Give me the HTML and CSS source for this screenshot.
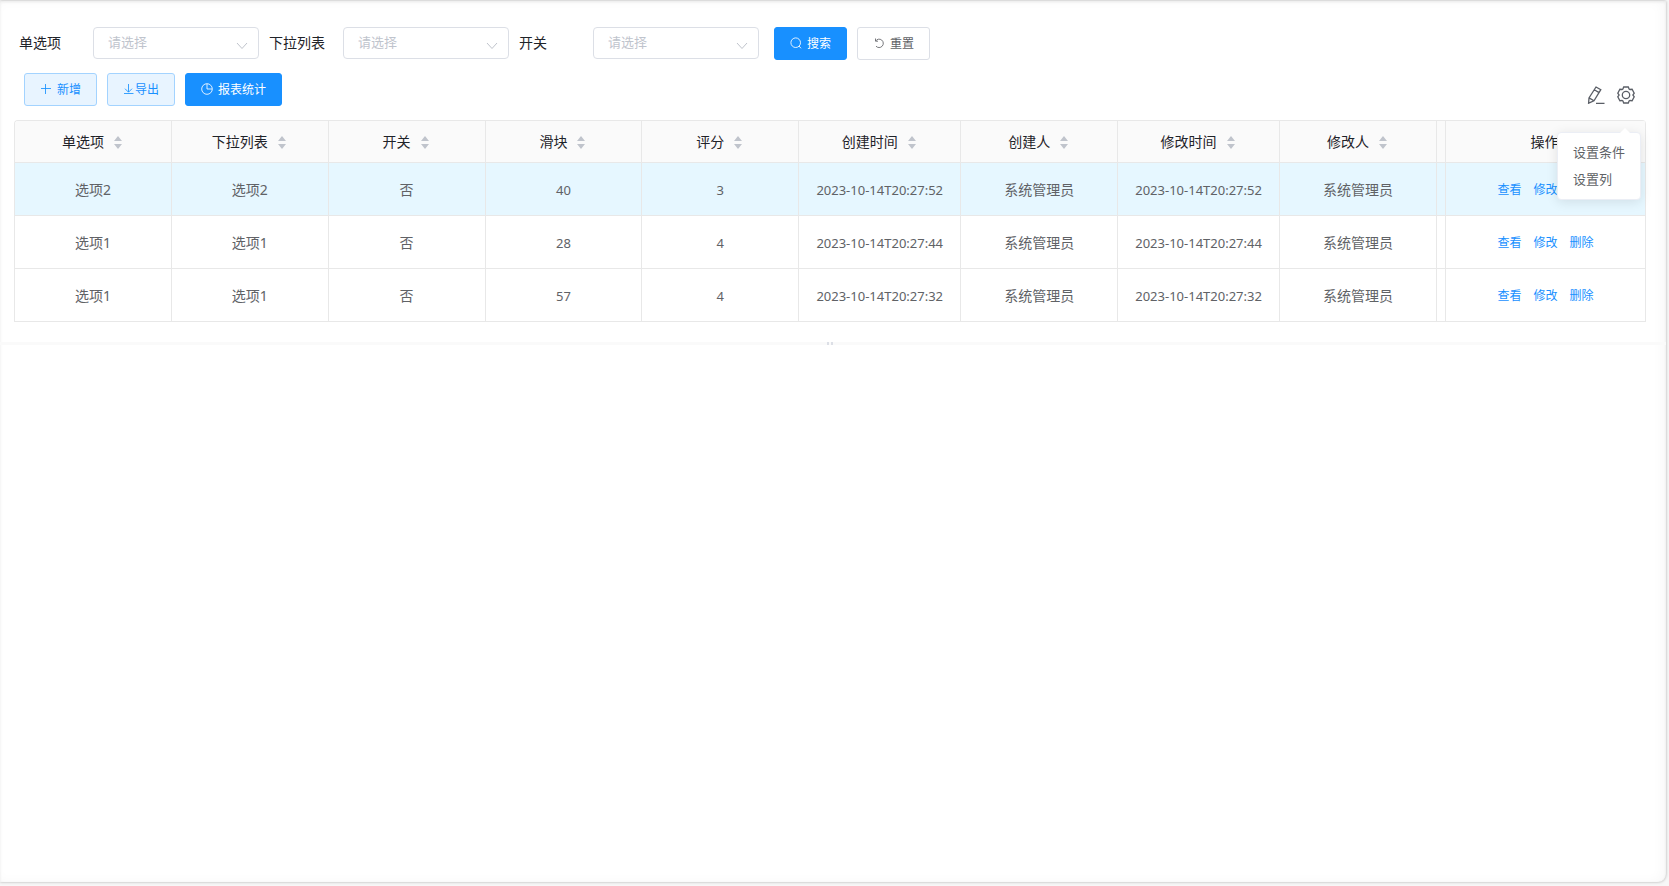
FILE: index.html
```
<!DOCTYPE html>
<html lang="zh-CN">
<head>
<meta charset="utf-8">
<title>列表</title>
<link rel="stylesheet" href="styles.css">
</head>
<body>
<svg class="defs" aria-hidden="true">
  <symbol id="sort" viewBox="0 0 8 13"><path d="M4 0 8 5H0zM0 8h8l-4 5z"/></symbol>
  <symbol id="search" viewBox="0 0 12 12"><circle cx="5.7" cy="5.7" r="4.8"/><path d="m9 9 2 2.3"/></symbol>
  <symbol id="reset" viewBox="0 0 12 12"><path d="M2.5 1.5V4.2H5M2.6 4A4.2 4.2 0 1 1 3 9.2"/></symbol>
  <symbol id="plus" viewBox="0 0 12 12"><path d="M5.5 1v10M1 5.5h10"/></symbol>
  <symbol id="download" viewBox="0 0 12 12"><path d="M5.5 1v8M2 5.7 5.5 9.2 9 5.7M1 10.5h9.5"/></symbol>
  <symbol id="pie" viewBox="0 0 12 12"><circle cx="6" cy="6" r="5.3"/><path d="M6 1v5h5"/></symbol>
  <symbol id="edit" viewBox="0 0 18 18"><path d="M9 1 13.8 3.7 7 14.8 1.6 17.2 2 11.9zM7.3 3.8l4.8 2.8M2 11.9l5 2.9M9 17.3h8.5"/></symbol>
  <symbol id="gear" viewBox="0 0 18 18"><path d="M6.7 1h4.6l.8 2 .9.5 2.1-.2 2.1 3.9L15.9 9l1.3 1.8-2.1 3.9-2.1-.2-.9.5-.8 2H6.7l-.8-2-.9-.5-2.1.2L.8 10.8 2.1 9 .8 7.2l2.1-3.9 2.1.2.9-.5z"/><circle cx="9" cy="9" r="3.7"/></symbol>
</svg>
<main class="panel">
  <section class="top-pane">
    <form class="filters">
      <label class="filter"><span class="filter-name">单选项</span><span class="select-box"><select><option>请选择</option></select><svg viewBox="0 0 12 8"><path d="m1 1 5 5.5L11 1"/></svg></span></label>
      <label class="filter"><span class="filter-name">下拉列表</span><span class="select-box"><select><option>请选择</option></select><svg viewBox="0 0 12 8"><path d="m1 1 5 5.5L11 1"/></svg></span></label>
      <label class="filter"><span class="filter-name">开关</span><span class="select-box"><select><option>请选择</option></select><svg viewBox="0 0 12 8"><path d="m1 1 5 5.5L11 1"/></svg></span></label>
      <div class="filter-buttons">
        <button type="button" class="btn primary"><svg class="icon"><use href="#search"/></svg>搜索</button>
        <button type="button" class="btn"><svg class="icon"><use href="#reset"/></svg>重置</button>
      </div>
    </form>
    <div class="toolbar">
      <button type="button" class="btn plain"><svg class="icon"><use href="#plus"/></svg>新增</button>
      <button type="button" class="btn plain tight"><svg class="icon"><use href="#download"/></svg>导出</button>
      <button type="button" class="btn primary"><svg class="icon"><use href="#pie"/></svg>报表统计</button>
      <div class="tools">
        <button type="button" class="tool" aria-label="编辑"><svg><use href="#edit"/></svg></button>
        <div class="menu-anchor">
          <button type="button" class="tool" aria-label="设置"><svg><use href="#gear"/></svg></button>
          <div class="popover"><button type="button">设置条件</button><button type="button">设置列</button></div>
        </div>
      </div>
    </div>
    <div class="table-frame">
    <table>
      <colgroup><col><col><col><col><col><col class="col-time"><col><col class="col-time"><col><col class="col-gap"><col class="col-actions"></colgroup>
      <thead><tr>
        <th>单选项<svg class="sort"><use href="#sort"/></svg></th>
        <th>下拉列表<svg class="sort"><use href="#sort"/></svg></th>
        <th>开关<svg class="sort"><use href="#sort"/></svg></th>
        <th>滑块<svg class="sort"><use href="#sort"/></svg></th>
        <th>评分<svg class="sort"><use href="#sort"/></svg></th>
        <th>创建时间<svg class="sort"><use href="#sort"/></svg></th>
        <th>创建人<svg class="sort"><use href="#sort"/></svg></th>
        <th>修改时间<svg class="sort"><use href="#sort"/></svg></th>
        <th>修改人<svg class="sort"><use href="#sort"/></svg></th>
        <td></td>
        <th>操作</th>
      </tr></thead>
      <tbody>
        <tr class="current"><td>选项2</td><td>选项2</td><td>否</td><td class="num">40</td><td class="num">3</td><td class="num">2023-10-14T20:27:52</td><td>系统管理员</td><td class="num">2023-10-14T20:27:52</td><td>系统管理员</td><td></td><td><div class="actions"><a href="#">查看</a><a href="#">修改</a><a href="#">删除</a></div></td></tr>
        <tr><td>选项1</td><td>选项1</td><td>否</td><td class="num">28</td><td class="num">4</td><td class="num">2023-10-14T20:27:44</td><td>系统管理员</td><td class="num">2023-10-14T20:27:44</td><td>系统管理员</td><td></td><td><div class="actions"><a href="#">查看</a><a href="#">修改</a><a href="#">删除</a></div></td></tr>
        <tr><td>选项1</td><td>选项1</td><td>否</td><td class="num">57</td><td class="num">4</td><td class="num">2023-10-14T20:27:32</td><td>系统管理员</td><td class="num">2023-10-14T20:27:32</td><td>系统管理员</td><td></td><td><div class="actions"><a href="#">查看</a><a href="#">修改</a><a href="#">删除</a></div></td></tr>
      </tbody>
    </table>
    </div>
  </section>
  <div class="splitter"><i></i><i></i></div>
  <section class="bottom-pane"></section>
</main>
</body>
</html>
```

FILE: styles.css
```
* { box-sizing: border-box; }
body {
  margin: 0;
  height: 100vh;
  padding: 1px 3px 4px 0;
  display: flex;
  background: #f7f7f7;
  color: #1f2329;
  font: 14px/20px "Noto Sans", "Noto Sans CJK SC", sans-serif;
}
button, select { font-family: inherit; }
.defs { position: absolute; width: 0; height: 0; }
svg { fill: none; stroke: currentColor; flex: none; }
.panel {
  flex: 1;
  min-width: 0;
  display: flex;
  flex-direction: column;
  background: #fff;
  border-radius: 0 0 8px 0;
  box-shadow: 0 0 3px rgba(0, 0, 0, .3), inset -4px 0 12px rgba(0, 0, 0, .03), inset 0 1px 3px rgba(0, 0, 0, .08);
}
.top-pane { padding: 26px 20px 20px 14px; }
.filters { display: flex; align-items: flex-start; padding-left: 5px; }
.filter { display: flex; align-items: center; margin-right: 10px; height: 32px; }
.filter-name { width: 74px; line-height: 32px; }
.select-box { position: relative; width: 166px; height: 32px; }
.select-box select {
  appearance: none;
  width: 100%;
  height: 100%;
  padding: 0 14px 2px;
  border: 1px solid #dcdfe6;
  border-radius: 4px;
  background: #fff;
  color: #bfc4cd;
  font-size: 13px;
}
.select-box svg { position: absolute; right: 11px; top: 15px; width: 12px; height: 8px; color: #c0c4cc; }
.filter-buttons { display: flex; gap: 10px; margin-left: 5px; }
.btn {
  display: flex;
  align-items: center;
  justify-content: center;
  gap: 5px;
  height: 33px;
  padding: 0 15px 1px;
  border: 1px solid #dcdfe6;
  border-radius: 3px;
  background: #fff;
  color: #606266;
  font-size: 12px;
}
.icon { width: 12px; height: 12px; stroke-opacity: .85; }
.btn.primary { background: #1890ff; border-color: #1890ff; color: #fff; }
.btn.plain { background: #e8f4ff; border-color: #a3d3ff; color: #1890ff; }
.btn.tight { gap: 0; }
.toolbar { display: flex; gap: 10px; padding: 13px 11px 14px 10px; }
.tools { display: flex; gap: 12px; margin-left: auto; padding-top: 13px; }
.tool { display: block; width: 18px; height: 18px; padding: 0; border: 0; background: none; color: #5a5e66; }
.tool svg { display: block; width: 18px; height: 18px; stroke-width: 1.3; }
.menu-anchor { position: relative; }
.popover {
  position: absolute;
  z-index: 2;
  top: 46px;
  right: -6px;
  width: 84px;
  padding: 6px 0;
  display: flex;
  flex-direction: column;
  background: #fff;
  border: 1px solid #ebeef5;
  border-radius: 4px;
  box-shadow: 0 2px 12px rgba(0, 0, 0, .1);
}
.popover::before {
  content: "";
  position: absolute;
  top: -5px;
  right: 10px;
  border: 5px solid transparent;
  border-top: 0;
  border-bottom-color: #fff;
}
.popover button { border: 0; background: none; padding: 0 0 0 15px; text-align: left; font-size: 13px; line-height: 27px; color: #606266; }
.table-frame { border: 1px solid #e8e8e8; border-width: 1px 0 0 1px; border-radius: 4px 4px 0 0; overflow: hidden; }
table { width: 100%; table-layout: fixed; border-collapse: separate; border-spacing: 0; }
.col-time { width: 162px; }
.col-gap { width: 9px; }
.col-actions { width: 200px; }
th, td { padding: 0; text-align: center; font-weight: 400; border: 1px solid #e8e8e8; border-width: 0 1px 1px 0; white-space: nowrap; }
th { padding-right: 2px; }
thead th, thead td { height: 42px; background: #fafafa; }
tbody td { height: 53px; padding-top: 2px; color: #606266; font-size: 14px; }
tbody .num { font-size: 13px; }
.current td { background: #e6f7ff; }
.sort { width: 8px; height: 13px; margin-left: 10px; vertical-align: -2px; fill: #c0c4cc; stroke: none; }
.actions { display: flex; justify-content: center; gap: 12px; font-size: 12px; }
.actions a { color: #1890ff; text-decoration: none; }
.splitter { display: flex; justify-content: center; gap: 2px; height: 3px; background: #fafafa; padding-right: 6px; }
.splitter i { width: 2px; background: #dcdfe6; }
.bottom-pane { flex: 1; }
```
